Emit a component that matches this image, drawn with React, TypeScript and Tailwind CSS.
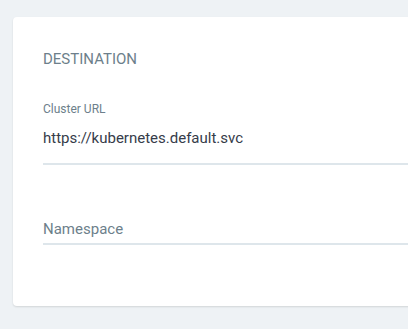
import React from "react";

export default function App() {
  return (
    <div
      className="min-h-[329px] overflow-hidden bg-[#eef2f5] pl-[13px] pt-[17px]"
      style={{ fontFamily: "Roboto, 'Liberation Sans', sans-serif" }}
    >
      <div className="h-[289px] w-[420px] rounded-[4px] bg-white pl-[30px] pt-[33px] shadow-[0_1px_2px_rgba(0,0,0,0.12)]">
        <div className="text-[15px] leading-[18px] text-[#6d7f8b] uppercase">Destination</div>

        {/* cluster url */}
        <div className="mt-[30px]">
          <div className="h-[22px] text-[12px] leading-[22px] text-[#6d7f8b]">Cluster URL</div>
          <div className="h-[43px] text-[15px] leading-[36px] text-[#363c4a]">
            https://kubernetes.default.svc
          </div>
          <div className="h-[2px] bg-[#dee6eb]" />
        </div>

        {/* namespace */}
        <div className="mt-[54px]">
          <div className="h-[24px] text-[15px] leading-[20px] text-[#6d7f8b]">Namespace</div>
          <div className="h-[2px] bg-[#dee6eb]" />
        </div>
      </div>
    </div>
  );
}
